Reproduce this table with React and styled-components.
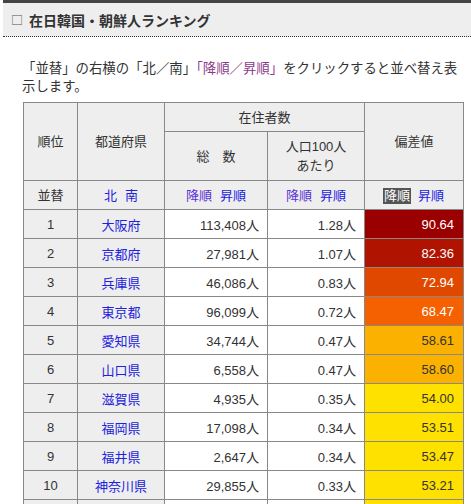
import styled, { createGlobalStyle } from "styled-components";

const GlobalStyle = createGlobalStyle`
  html, body {
    margin: 0;
    padding: 0;
    overflow: hidden;
    background: #ffffff;
  }
  body {
    font-family: "Liberation Sans", "Noto Sans CJK JP", sans-serif;
    color: #333333;
  }
`;

const rows = [
  { rank: 1, pref: "大阪府", total: "113,408人", per: "1.28人", score: "90.64", bg: "#9b0000", light: true },
  { rank: 2, pref: "京都府", total: "27,981人", per: "1.07人", score: "82.36", bg: "#b01400", light: true },
  { rank: 3, pref: "兵庫県", total: "46,086人", per: "0.83人", score: "72.94", bg: "#e04800", light: true },
  { rank: 4, pref: "東京都", total: "96,099人", per: "0.72人", score: "68.47", bg: "#f56000", light: true },
  { rank: 5, pref: "愛知県", total: "34,744人", per: "0.47人", score: "58.61", bg: "#fbb100" },
  { rank: 6, pref: "山口県", total: "6,558人", per: "0.47人", score: "58.60", bg: "#fbb100" },
  { rank: 7, pref: "滋賀県", total: "4,935人", per: "0.35人", score: "54.00", bg: "#ffe100" },
  { rank: 8, pref: "福岡県", total: "17,098人", per: "0.34人", score: "53.51", bg: "#ffe100" },
  { rank: 9, pref: "福井県", total: "2,647人", per: "0.34人", score: "53.47", bg: "#ffe100" },
  { rank: 10, pref: "神奈川県", total: "29,855人", per: "0.33人", score: "53.21", bg: "#ffe100" },
  { rank: 11, pref: "奈良県", total: "4,227人", per: "0.31人", score: "52.65", bg: "#ffe100" },
];

export default function App() {
  return (
    <>
      <GlobalStyle />
      <Page>
        <Heading>
          <Box>□</Box>在日韓国・朝鮮人ランキング
        </Heading>
        <Intro>
          「並替」の右横の「北／南」<Accent>「降順／昇順」</Accent>をクリックすると並べ替え表示します。
        </Intro>
        <Ranking>
          <colgroup>
            <col style={{ width: 54 }} />
            <col style={{ width: 87 }} />
            <col style={{ width: 103 }} />
            <col style={{ width: 97 }} />
            <col style={{ width: 99 }} />
          </colgroup>
          <thead>
            <tr>
              <HeadCell rowSpan={2}>順位</HeadCell>
              <HeadCell rowSpan={2}>都道府県</HeadCell>
              <HeadCell colSpan={2} $h={28}>在住者数</HeadCell>
              <HeadCell rowSpan={2}>偏差値</HeadCell>
            </tr>
            <tr>
              <HeadCell $h={48}>総　数</HeadCell>
              <HeadCell $h={48}>
                人口100人
                <br />
                あたり
              </HeadCell>
            </tr>
            <tr>
              <HeadCell $h={28}>並替</HeadCell>
              <HeadCell>
                <SortLink>北</SortLink>
                <SortLink>南</SortLink>
              </HeadCell>
              <HeadCell>
                <SortLink $visited>降順</SortLink>
                <SortLink>昇順</SortLink>
              </HeadCell>
              <HeadCell>
                <SortLink $visited>降順</SortLink>
                <SortLink>昇順</SortLink>
              </HeadCell>
              <HeadCell>
                <SortLink $active>降順</SortLink>
                <SortLink>昇順</SortLink>
              </HeadCell>
            </tr>
          </thead>
          <tbody>
            {rows.map((r) => (
              <tr key={r.rank}>
                <RankCell>{r.rank}</RankCell>
                <RankCell>
                  <PrefLink>{r.pref}</PrefLink>
                </RankCell>
                <NumCell>{r.total}</NumCell>
                <NumCell>{r.per}</NumCell>
                <ScoreCell $bg={r.bg} $light={r.light}>
                  {r.score}
                </ScoreCell>
              </tr>
            ))}
          </tbody>
        </Ranking>
      </Page>
    </>
  );
}

const Page = styled.div`
  width: 471px;
`;

const Heading = styled.h2`
  margin: 0 0 0 3px;
  height: 33px;
  padding-left: 8px;
  display: flex;
  align-items: center;

  font-size: 14px;
  font-weight: bold;
  color: #333333;

  background: #eeeeee;
  border-top: 3px solid #444444;
  border-bottom: 1px dotted #333333;
`;

const Box = styled.span`
  font-family: "Noto Sans CJK JP", sans-serif;
  font-weight: normal;
  font-size: 12px;
  color: #555555;
  margin-right: 6px;
`;

const Intro = styled.p`
  margin: 23px 0 0 22px;
  width: 445px;
  font-size: 13.4px;
  line-height: 18px;
  color: #333333;
`;

const Accent = styled.span`
  color: #8b3a8b;
`;

const Ranking = styled.table`
  margin: 6px 0 0 23px;
  width: 440px;
  table-layout: fixed;
  border-collapse: collapse;
  font-size: 13px;

  td,
  th {
    border: 1px solid #888888;
    padding: 0;
  }
`;

const HeadCell = styled.th`
  height: ${(p) => (p.$h ? `${p.$h}px` : "auto")};
  background: #eeeeee;
  font-weight: normal;
  text-align: center;
  line-height: 19px;
  color: #333333;
`;

const SortLink = styled.span`
  display: inline-block;
  margin: 0 3px;
  padding: 0 1px;
  line-height: 16px;
  color: ${(p) => (p.$active ? "#ffffff" : p.$visited ? "#5a2fd6" : "#2222dd")};
  background: ${(p) => (p.$active ? "#555555" : "transparent")};
  cursor: pointer;
`;

const RankCell = styled.td`
  height: 28px;
  background: #eeeeee;
  text-align: center;
`;

const PrefLink = styled.span`
  color: #2222dd;
  cursor: pointer;
`;

const NumCell = styled.td`
  height: 28px;
  background: #ffffff;
  text-align: right;
  && {
    padding-right: 8px;
  }
`;

const ScoreCell = styled.td`
  height: 28px;
  text-align: right;
  background: ${(p) => p.$bg};
  color: ${(p) => (p.$light ? "#ffffff" : "#333333")};
  && {
    padding-right: 9px;
  }
`;
